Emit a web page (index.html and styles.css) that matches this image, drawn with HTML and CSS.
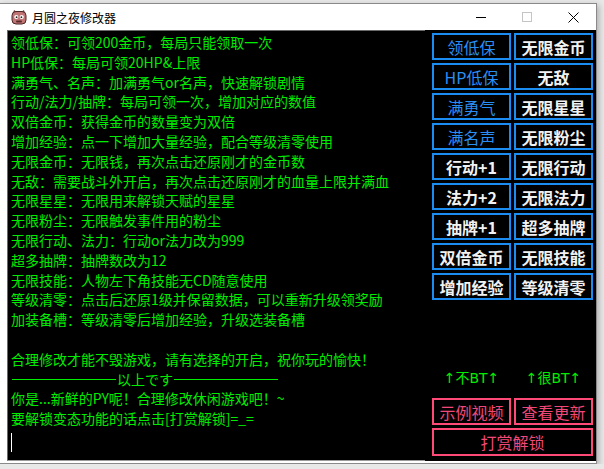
FILE: index.html
```html
<!DOCTYPE html>
<html lang="zh-CN">
<head>
    <meta charset="UTF-8">
    <title>月圆之夜修改器</title>
    <link rel="stylesheet" href="styles.css">
</head>
<body>
    <div class="window">
        <div class="titlebar">
            <svg class="app-icon" viewBox="0 0 16 16">
                <path d="M2 5 L3 1 L6 3 Z M14 5 L13 1 L10 3 Z" fill="#6b3b3b"/>
                <rect x="1" y="2.5" width="14" height="12.5" rx="4" fill="#c07474" stroke="#4a2626"/>
                <circle cx="5.3" cy="8" r="2.1" fill="#fff"/>
                <circle cx="10.7" cy="8" r="2.1" fill="#fff"/>
                <circle cx="5.6" cy="8.2" r="0.9" fill="#222"/>
                <circle cx="10.4" cy="8.2" r="0.9" fill="#222"/>
                <rect x="5" y="11.4" width="6" height="2" rx="1" fill="#5a2a2a"/>
            </svg>
            <span class="title">月圆之夜修改器</span>
            <div class="controls">
                <div class="ctl">
                    <svg width="10" height="10" viewBox="0 0 10 10"><path d="M0 5.5 H10" stroke="#000" stroke-width="1"/></svg>
                </div>
                <div class="ctl">
                    <svg width="10" height="10" viewBox="0 0 10 10"><rect x="0.5" y="0.5" width="9" height="9" fill="none" stroke="#c4c4c4"/></svg>
                </div>
                <div class="ctl">
                    <svg width="11" height="11" viewBox="0 0 11 11"><path d="M0.5 0.5 L10.5 10.5 M10.5 0.5 L0.5 10.5" stroke="#000" stroke-width="1"/></svg>
                </div>
            </div>
        </div>

        <div class="client">
            <div class="log">
                <p>领低保：可领200金币，每局只能领取一次</p>
                <p>HP低保：每局可领20HP&amp;上限</p>
                <p>满勇气、名声：加满勇气or名声，快速解锁剧情</p>
                <p>行动/法力/抽牌：每局可领一次，增加对应的数值</p>
                <p>双倍金币：获得金币的数量变为双倍</p>
                <p>增加经验：点一下增加大量经验，配合等级清零使用</p>
                <p>无限金币：无限钱，再次点击还原刚才的金币数</p>
                <p>无敌：需要战斗外开启，再次点击还原刚才的血量上限并满血</p>
                <p>无限星星：无限用来解锁天赋的星星</p>
                <p>无限粉尘：无限触发事件用的粉尘</p>
                <p>无限行动、法力：行动or法力改为999</p>
                <p>超多抽牌：抽牌数改为12</p>
                <p>无限技能：人物左下角技能无CD随意使用</p>
                <p>等级清零：点击后还原1级并保留数据，可以重新升级领奖励</p>
                <p>加装备槽：等级清零后增加经验，升级选装备槽</p>
                <p class="blank"></p>
                <p>合理修改才能不毁游戏，请有选择的开启，祝你玩的愉快！</p>
                <p class="divider"><span class="rule"></span>以上です<span class="rule"></span></p>
                <p>你是...新鲜的PY呢！合理修改休闲游戏吧！~</p>
                <p>要解锁变态功能的话点击[打赏解锁]=_=</p>
                <p class="blank"><span class="caret"></span></p>
            </div>

            <div class="side">
                <div class="btn-grid">
                    <button class="btn blue">领低保</button>
                    <button class="btn">无限金币</button>
                    <button class="btn blue">HP低保</button>
                    <button class="btn">无敌</button>
                    <button class="btn blue">满勇气</button>
                    <button class="btn">无限星星</button>
                    <button class="btn blue">满名声</button>
                    <button class="btn">无限粉尘</button>
                    <button class="btn">行动+1</button>
                    <button class="btn">无限行动</button>
                    <button class="btn">法力+2</button>
                    <button class="btn">无限法力</button>
                    <button class="btn">抽牌+1</button>
                    <button class="btn">超多抽牌</button>
                    <button class="btn">双倍金币</button>
                    <button class="btn">无限技能</button>
                    <button class="btn">增加经验</button>
                    <button class="btn">等级清零</button>
                </div>

                <div class="lower">
                    <div class="bt-labels">
                        <span>↑不BT↑</span>
                        <span>↑很BT↑</span>
                    </div>
                    <div class="pink-grid">
                        <button class="btn pink">示例视频</button>
                        <button class="btn pink">查看更新</button>
                        <button class="btn pink wide">打赏解锁</button>
                    </div>
                </div>
            </div>
        </div>
    </div>
</body>
</html>
```

FILE: styles.css
```css
body {
    margin: 0;
    background: #e8e8e8;
    font-family: "Noto Sans CJK SC", sans-serif;
}

.window {
    width: 596px;
    margin-top: 3px;
    padding-bottom: 2px;
    background: #fff;
    border: 1px solid #8a8a8a;
    border-left: none;
    box-shadow: 2px 2px 6px rgba(0, 0, 0, 0.25);
}

.titlebar {
    height: 26px;
    display: flex;
    align-items: center;
    padding-left: 11px;
}

.app-icon {
    width: 16px;
    height: 16px;
    margin-right: 5px;
}

.title {
    font-size: 12px;
    color: #000;
}

.controls {
    margin-left: auto;
    height: 100%;
    display: flex;
}

.ctl {
    width: 46px;
    display: flex;
    align-items: center;
    justify-content: center;
}

.client {
    display: flex;
    height: 431px;
    margin-left: 7px;
    background: #000;
}

.log {
    width: 418px;
    box-sizing: border-box;
    padding: 2px 0 0 3px;
    border-top: 1px solid #6a6a6a;
    border-left: 1px solid #6a6a6a;
    border-bottom: 1px solid #9a9a9a;
    color: #00ec00;
    font-size: 14px;
    line-height: 19.8px;
    white-space: nowrap;
    overflow: hidden;
}

.log p {
    margin: 0;
}

.log .blank {
    height: 19.8px;
}

.log .divider {
    display: flex;
    align-items: center;
}

.rule {
    display: inline-block;
    width: 104px;
    height: 1px;
    margin: 1px 1px 0 1px;
    background: #00ec00;
}

.caret {
    display: block;
    width: 1px;
    height: 19px;
    margin-top: 4px;
    background: #fff;
}

.side {
    flex: 1;
    display: flex;
    flex-direction: column;
    padding: 3px 3px 5px 7px;
}

.btn-grid {
    display: grid;
    grid-template-columns: 79px 79px;
    grid-auto-rows: 27px;
    gap: 3px;
}

.btn {
    box-sizing: border-box;
    padding: 0;
    border: 2px solid #1a8cf2;
    background: #000;
    color: #f2f2f2;
    font-family: inherit;
    font-size: 16px;
    font-weight: bold;
    line-height: 1;
    display: flex;
    align-items: center;
    justify-content: center;
    cursor: pointer;
}

.btn.blue {
    color: #2a8ff5;
    font-weight: normal;
}

.lower {
    margin-top: auto;
}

.bt-labels {
    display: grid;
    grid-template-columns: 79px 79px;
    gap: 3px;
    margin-bottom: 10px;
    color: #00ec00;
    font-family: "DejaVu Sans", "Noto Sans CJK SC", sans-serif;
    font-size: 14px;
    line-height: 20px;
    text-align: center;
}

.pink-grid {
    display: grid;
    grid-template-columns: 79px 79px;
    grid-template-rows: 27px 28px;
    gap: 3px;
}

.btn.pink {
    border-color: #ff4a78;
    color: #f04878;
    font-weight: normal;
}

.btn.wide {
    grid-column: span 2;
}
```
